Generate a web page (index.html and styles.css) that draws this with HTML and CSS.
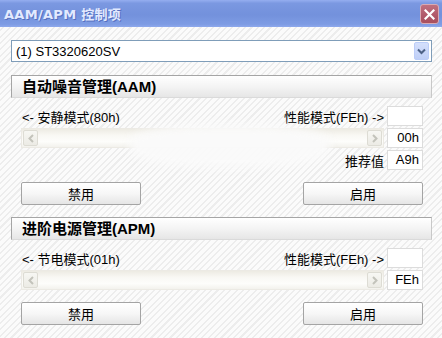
FILE: index.html
```html
<!DOCTYPE html>
<html lang="zh">
<head>
<meta charset="utf-8">
<title>AAM/APM 控制项</title>
<link rel="stylesheet" href="styles.css">
</head>
<body>
<div class="window">
  <div class="titlebar">
    <span class="title">AAM/APM 控制项</span>
    <span class="close">
      <svg width="11" height="11" viewBox="0 0 11 11"><path d="M1.5 1.5 L9.5 9.5 M9.5 1.5 L1.5 9.5" stroke="#fff" stroke-width="2.2" stroke-linecap="square"/></svg>
    </span>
  </div>
  <div class="content">
    <div class="select">
      <span class="select-text">(1) ST3320620SV</span>
      <span class="select-btn">
        <svg width="9" height="7" viewBox="0 0 9 7"><path d="M1 1.5 L4.5 5 L8 1.5" stroke="#4d6185" stroke-width="2" fill="none"/></svg>
      </span>
    </div>

    <div class="section">
      <div class="header">自动噪音管理(AAM)</div>
      <div class="grid">
        <div class="labels"><span>&lt;- 安静模式(80h)</span><span>性能模式(FEh) -&gt;</span></div>
        <div class="box"></div>
        <div class="scroll">
          <span class="sbtn"><svg width="6" height="9" viewBox="0 0 6 9"><path d="M5 1 L1.5 4.5 L5 8" stroke="#c3c3bb" stroke-width="2" fill="none"/></svg></span>
          <span class="track"></span>
          <span class="sbtn"><svg width="6" height="9" viewBox="0 0 6 9"><path d="M1 1 L4.5 4.5 L1 8" stroke="#c3c3bb" stroke-width="2" fill="none"/></svg></span>
        </div>
        <div class="box">00h</div>
        <div class="labels right"><span>推荐值</span></div>
        <div class="box">A9h</div>
      </div>
      <div class="buttons">
        <span class="btn">禁用</span>
        <span class="btn">启用</span>
      </div>
    </div>

    <div class="section second">
      <div class="header">进阶电源管理(APM)</div>
      <div class="grid">
        <div class="labels"><span>&lt;- 节电模式(01h)</span><span>性能模式(FEh) -&gt;</span></div>
        <div class="box"></div>
        <div class="scroll">
          <span class="sbtn"><svg width="6" height="9" viewBox="0 0 6 9"><path d="M5 1 L1.5 4.5 L5 8" stroke="#c3c3bb" stroke-width="2" fill="none"/></svg></span>
          <span class="track"></span>
          <span class="sbtn"><svg width="6" height="9" viewBox="0 0 6 9"><path d="M1 1 L4.5 4.5 L1 8" stroke="#c3c3bb" stroke-width="2" fill="none"/></svg></span>
        </div>
        <div class="box">FEh</div>
      </div>
      <div class="buttons">
        <span class="btn">禁用</span>
        <span class="btn">启用</span>
      </div>
    </div>
    <div class="smudge"></div>
  </div>
</div>
</body>
</html>
```

FILE: styles.css
```css
* { box-sizing: border-box; }
html, body { margin: 0; padding: 0; }
body {
  width: 442px;
  height: 338px;
  overflow: hidden;
  font-family: "Liberation Sans", "Noto Sans CJK SC", sans-serif;
  font-size: 13px;
  color: #000;
}
.window {
  width: 442px;
  height: 338px;
  display: flex;
  flex-direction: column;
  background: repeating-linear-gradient(135deg, #fbfbfb 0, #fbfbfb 3px, #ededed 3px, #ededed 4.5px);
}
.titlebar {
  height: 27px;
  flex: none;
  display: flex;
  align-items: center;
  justify-content: space-between;
  padding: 0 3px 0 4px;
  background: linear-gradient(#95aef0 0, #7b98e1 12%, #7391dc 55%, #7e9ce4 90%, #8fa9ec 100%);
}
.title {
  font-family: "DejaVu Sans", "Noto Sans CJK SC", sans-serif;
  font-weight: bold;
  font-size: 13px;
  color: #e2eaff;
  text-shadow: 1px 1px 0 #5670c0;
  letter-spacing: 0.3px;
}
.close {
  width: 19px;
  height: 20px;
  margin-top: 1px;
  display: flex;
  align-items: center;
  justify-content: center;
  border: 1px solid #d8aab4;
  border-radius: 3px;
  background: linear-gradient(#c0707f, #b05869 60%, #a9505f);
}
.content {
  position: relative;
  flex: 1;
  padding: 13px 10px 0 11px;
  display: flex;
  flex-direction: column;
}
.select {
  height: 22px;
  border: 1px solid #7f9db9;
  background: #fff;
  display: flex;
  align-items: center;
  justify-content: space-between;
  padding: 0 2px 0 4px;
}
.select-btn {
  width: 15px;
  height: 18px;
  display: flex;
  align-items: center;
  justify-content: center;
  border: 1px solid #bccdf8;
  border-radius: 2px;
  background: linear-gradient(#d5e0fc, #bfcff7);
}
.section {
  margin-top: 13px;
  display: flex;
  flex-direction: column;
}
.section.second { margin-top: 12px; }
.header {
  height: 23px;
  border: 1px solid #a5a5a5;
  border-right-color: #c8c8c8;
  border-bottom-color: #dadada;
  background: linear-gradient(#ffffff, #f4f4f4 50%, #e6e6e6);
  font-weight: bold;
  font-size: 15px;
  line-height: 21px;
  padding-left: 10px;
}
.grid {
  margin: 8px 9px 0 10px;
  display: grid;
  grid-template-columns: 1fr 36px;
  grid-auto-rows: 20px;
  column-gap: 3px;
  row-gap: 2px;
}
.labels {
  display: flex;
  align-items: center;
  justify-content: space-between;
  padding-left: 1px;
  white-space: nowrap;
}
.labels.right { justify-content: flex-end; }
.box {
  border: 1px solid #dcdcdc;
  background: #fff;
  text-align: right;
  padding-right: 3px;
  line-height: 18px;
}
.scroll {
  display: flex;
  align-items: stretch;
  border: 1px solid #eceae4;
  background: linear-gradient(#edebe3, #f9f8f4 35%, #fdfdfb 70%, #f3f2ed);
  padding: 1px;
}
.track { flex: 1; }
.sbtn {
  width: 15px;
  display: flex;
  align-items: center;
  justify-content: center;
  border: 1px solid #dddcd4;
  border-radius: 2px;
  background: linear-gradient(#f7f7f3, #ecebe5);
}
.buttons {
  margin: 12px 9px 0 10px;
  display: flex;
  justify-content: space-between;
}
.btn {
  width: 120px;
  height: 23px;
  display: flex;
  align-items: center;
  justify-content: center;
  border: 1px solid #a4a4a4;
  border-radius: 2px;
  background: linear-gradient(#ffffff, #f7f7f7 50%, #e5e5e5);
}
.smudge {
  position: absolute;
  left: 130px;
  top: 97px;
  width: 200px;
  height: 44px;
  border-radius: 40%;
  background: rgba(250,250,250,0.95);
  filter: blur(5px);
  pointer-events: none;
}
```
